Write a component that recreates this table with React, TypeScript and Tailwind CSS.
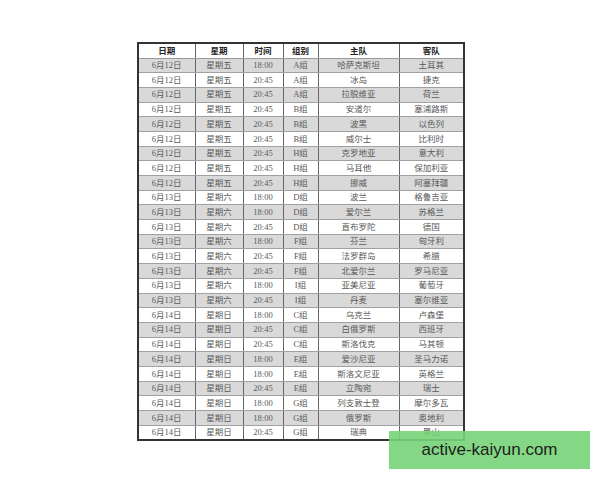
import React from "react";

const rows: string[][] = [
  ["6月12日", "星期五", "18:00", "A组", "哈萨克斯坦", "土耳其"],
  ["6月12日", "星期五", "20:45", "A组", "冰岛", "捷克"],
  ["6月12日", "星期五", "20:45", "A组", "拉脱维亚", "荷兰"],
  ["6月12日", "星期五", "20:45", "B组", "安道尔", "塞浦路斯"],
  ["6月12日", "星期五", "20:45", "B组", "波黑", "以色列"],
  ["6月12日", "星期五", "20:45", "B组", "威尔士", "比利时"],
  ["6月12日", "星期五", "20:45", "H组", "克罗地亚", "意大利"],
  ["6月12日", "星期五", "20:45", "H组", "马耳他", "保加利亚"],
  ["6月12日", "星期五", "20:45", "H组", "挪威", "阿塞拜疆"],
  ["6月13日", "星期六", "18:00", "D组", "波兰", "格鲁吉亚"],
  ["6月13日", "星期六", "18:00", "D组", "爱尔兰", "苏格兰"],
  ["6月13日", "星期六", "20:45", "D组", "直布罗陀", "德国"],
  ["6月13日", "星期六", "18:00", "F组", "芬兰", "匈牙利"],
  ["6月13日", "星期六", "20:45", "F组", "法罗群岛", "希腊"],
  ["6月13日", "星期六", "20:45", "F组", "北爱尔兰", "罗马尼亚"],
  ["6月13日", "星期六", "18:00", "I组", "亚美尼亚", "葡萄牙"],
  ["6月13日", "星期六", "20:45", "I组", "丹麦", "塞尔维亚"],
  ["6月14日", "星期日", "18:00", "C组", "乌克兰", "卢森堡"],
  ["6月14日", "星期日", "20:45", "C组", "白俄罗斯", "西班牙"],
  ["6月14日", "星期日", "20:45", "C组", "斯洛伐克", "马其顿"],
  ["6月14日", "星期日", "18:00", "E组", "爱沙尼亚", "圣马力诺"],
  ["6月14日", "星期日", "18:00", "E组", "斯洛文尼亚", "英格兰"],
  ["6月14日", "星期日", "20:45", "E组", "立陶宛", "瑞士"],
  ["6月14日", "星期日", "18:00", "G组", "列支敦士登", "摩尔多瓦"],
  ["6月14日", "星期日", "18:00", "G组", "俄罗斯", "奥地利"],
  ["6月14日", "星期日", "20:45", "G组", "瑞典", "黑山"],
];

const headers = ["日期", "星期", "时间", "组别", "主队", "客队"];

export default function App() {
  return (
    <div
      className="relative w-[600px] h-[480px] bg-white overflow-hidden"
      style={{ fontFamily: '"Liberation Serif", "Noto Sans CJK SC", serif' }}
    >
      <div className="pt-[42px] pl-[137px]">
        <table className="table-fixed border-collapse border-2 border-[#333] w-[326px] text-[8.5px] leading-none">
          <colgroup>
            <col className="w-[57px]" />
            <col className="w-[48px]" />
            <col className="w-[40px]" />
            <col className="w-[35px]" />
            <col className="w-[81px]" />
            <col className="w-[65px]" />
          </colgroup>
          <thead>
            <tr className="h-[15px] bg-white">
              {headers.map((h) => (
                <th
                  key={h}
                  className="border-x border-x-[#666] border-b border-b-[#999] p-0 font-bold text-[#222] text-center align-middle"
                >
                  {h}
                </th>
              ))}
            </tr>
          </thead>
          <tbody>
            {rows.map((r, i) => (
              <tr
                key={i}
                className={`h-[14.7px] ${i % 2 === 0 ? "bg-[#d9d9d9]" : "bg-white"}`}
              >
                {r.map((c, j) => (
                  <td
                    key={j}
                    className="border-x border-x-[#666] border-b border-b-[#a0a0a0] p-0 text-center align-middle text-[#595959]"
                  >
                    {c}
                  </td>
                ))}
              </tr>
            ))}
          </tbody>
        </table>
      </div>
      <div
        className="absolute left-[389px] top-[431px] w-[201px] h-[38px] bg-[#77d377]/90 flex items-center justify-center text-[17px] text-[#1e1e1e]"
        style={{ fontFamily: '"Liberation Sans", Arial, sans-serif' }}
      >
        active-kaiyun.com
      </div>
    </div>
  );
}
